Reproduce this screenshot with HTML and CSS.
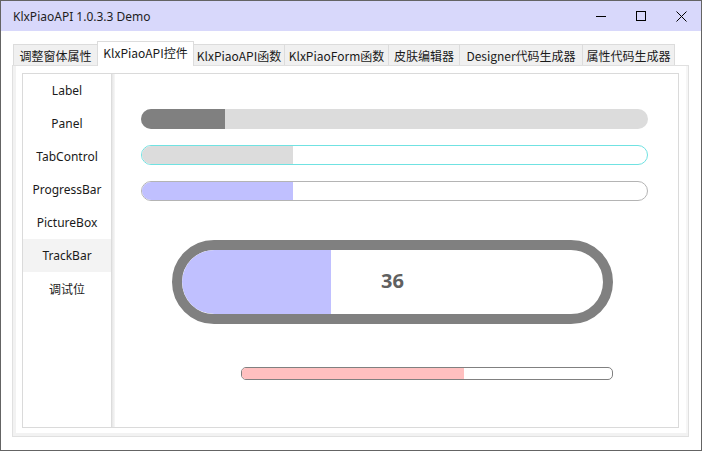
FILE: index.html
```html
<!DOCTYPE html>
<html lang="zh-CN">
<head>
<meta charset="utf-8">
<title>KlxPiaoAPI 1.0.3.3 Demo</title>
<link rel="stylesheet" href="styles.css">
</head>
<body>
<div class="window">
  <div class="titlebar">
    <span class="title">KlxPiaoAPI 1.0.3.3 Demo</span>
    <div class="controls">
      <span class="ctl"><svg width="10" height="10" viewBox="0 0 10 10"><path d="M0 5.5H10" stroke="#000" stroke-width="1"/></svg></span>
      <span class="ctl"><svg width="10" height="10" viewBox="0 0 10 10"><rect x="0.5" y="0.5" width="9" height="9" fill="none" stroke="#000" stroke-width="1"/></svg></span>
      <span class="ctl"><svg width="11" height="11" viewBox="0 0 11 11"><path d="M0.5 0.5L10.5 10.5M10.5 0.5L0.5 10.5" stroke="#000" stroke-width="1"/></svg></span>
    </div>
  </div>
  <div class="body">
    <div class="tabs">
      <div class="tab w1">调整窗体属性</div>
      <div class="tab active w2">KlxPiaoAPI控件</div>
      <div class="tab w3">KlxPiaoAPI函数</div>
      <div class="tab w4">KlxPiaoForm函数</div>
      <div class="tab w5">皮肤编辑器</div>
      <div class="tab w6">Designer代码生成器</div>
      <div class="tab w7">属性代码生成器</div>
    </div>
    <div class="page">
      <div class="panel">
        <div class="list">
          <div class="item">Label</div>
          <div class="item">Panel</div>
          <div class="item">TabControl</div>
          <div class="item">ProgressBar</div>
          <div class="item">PictureBox</div>
          <div class="item selected">TrackBar</div>
          <div class="item">调试位</div>
        </div>
        <div class="divider"></div>
        <div class="content">
          <div class="bar bar1"><div class="fill" style="width:84px"></div></div>
          <div class="bar bar2"><div class="fill" style="width:152px"></div></div>
          <div class="bar bar3"><div class="fill" style="width:152px"></div></div>
          <div class="big">
            <div class="big-inner">
              <div class="big-fill" style="width:149px"></div>
              <span class="big-val">36</span>
            </div>
          </div>
          <div class="slim"><div class="slim-fill" style="width:60%"></div></div>
        </div>
      </div>
    </div>
  </div>
</div>
</body>
</html>
```

FILE: styles.css
```css
* { box-sizing: border-box; }
html, body { margin: 0; padding: 0; background: #fff; }
body {
  font-family: "Noto Sans", "Noto Sans CJK SC", sans-serif;
  font-size: 12px;
  color: #1a1a1a;
}
.window {
  width: 702px;
  height: 451px;
  border: 1px solid #646464;
  display: flex;
  flex-direction: column;
  background: #fff;
}
.titlebar {
  height: 30px;
  background: #d8d8fb;
  display: flex;
  align-items: center;
  justify-content: space-between;
  flex-shrink: 0;
}
.title {
  padding-left: 12px;
  font-size: 12px;
  color: #1e1e1e;
}
.controls { display: flex; height: 30px; }
.ctl {
  width: 40px;
  height: 30px;
  display: flex;
  align-items: center;
  justify-content: center;
}
.body {
  flex: 1;
  padding: 10px 0 0 11px;
}
.tabs {
  display: flex;
  align-items: flex-end;
  height: 24px;
  padding-left: 1px;
}
.tab {
  height: 21px;
  border: 1px solid #dcdcdc;
  border-bottom: none;
  background: #f0f0f0;
  font-family: "Noto Sans CJK SC", sans-serif;
  font-size: 12px;
  color: #1a1a1a;
  display: flex;
  align-items: center;
  justify-content: center;
  white-space: nowrap;
  margin-right: -1px;
}
.tab.active {
  height: 25px;
  background: #fff;
  margin-bottom: -1px;
  position: relative;
  z-index: 1;
  padding-bottom: 3px;
}
.w1 { width: 85px; }
.w2 { width: 97px; }
.w3 { width: 92px; }
.w4 { width: 105px; }
.w5 { width: 72px; }
.w6 { width: 124px; }
.w7 { width: 93px; }
.page {
  width: 677px;
  height: 372px;
  border: 1px solid #e0e0e0;
  box-shadow: inset 3px -3px 0 #f2f2f2, inset -2px 0 0 #f6f6f6;
  padding: 7px 10px 8px 9px;
  background: #fff;
}
.panel {
  width: 657px;
  height: 355px;
  border: 1px solid #dadada;
  display: flex;
}
.list {
  width: 89px;
  border-right: 1px solid #dcdcdc;
  flex-shrink: 0;
}
.item {
  height: 33px;
  display: flex;
  align-items: center;
  justify-content: center;
  font-family: "Noto Sans", "Noto Sans CJK SC", sans-serif;
  font-size: 12px;
  color: #1a1a1a;
}
.item.selected { background: #f3f3f3; }
.divider {
  width: 3px;
  flex-shrink: 0;
  background: linear-gradient(to right, #e6e6e6, #f7f7f7);
}
.content {
  flex: 1;
  padding: 35px 0 0 26px;
  display: flex;
  flex-direction: column;
  align-items: flex-start;
}
.bar {
  width: 507px;
  height: 20px;
  border-radius: 10px;
  overflow: hidden;
  margin-bottom: 16px;
  flex-shrink: 0;
}
.bar .fill { height: 100%; }
.bar1 { background: #dcdcdc; }
.bar1 .fill { background: #808080; }
.bar2 { background: #fff; border: 1px solid #70e2e2; }
.bar2 .fill { background: #dcdcdc; margin-left: -1px; }
.bar3 { background: #fff; border: 1px solid #b4b4b4; }
.bar3 .fill { background: #c0c0ff; margin-left: -1px; }
.big {
  margin: 23px 0 0 31px;
  width: 441px;
  height: 84px;
  flex-shrink: 0;
  border: 10px solid #808080;
  border-radius: 42px;
  overflow: hidden;
}
.big-inner {
  position: relative;
  height: 100%;
  border-radius: 32px;
  overflow: hidden;
}
.big-fill { height: 100%; background: #c0c0ff; }
.big-val {
  position: absolute;
  left: 0;
  right: 0;
  top: 0;
  bottom: 0;
  padding-bottom: 3px;
  display: flex;
  align-items: center;
  justify-content: center;
  font-family: "Noto Sans", sans-serif;
  font-weight: bold;
  font-size: 20px;
  color: #606060;
}
.slim {
  margin: 43px 0 0 100px;
  width: 372px;
  height: 13px;
  flex-shrink: 0;
  border: 1px solid #808080;
  border-radius: 5px;
  overflow: hidden;
  background: #fff;
}
.slim-fill { height: 100%; background: #ffc0c0; }
```
